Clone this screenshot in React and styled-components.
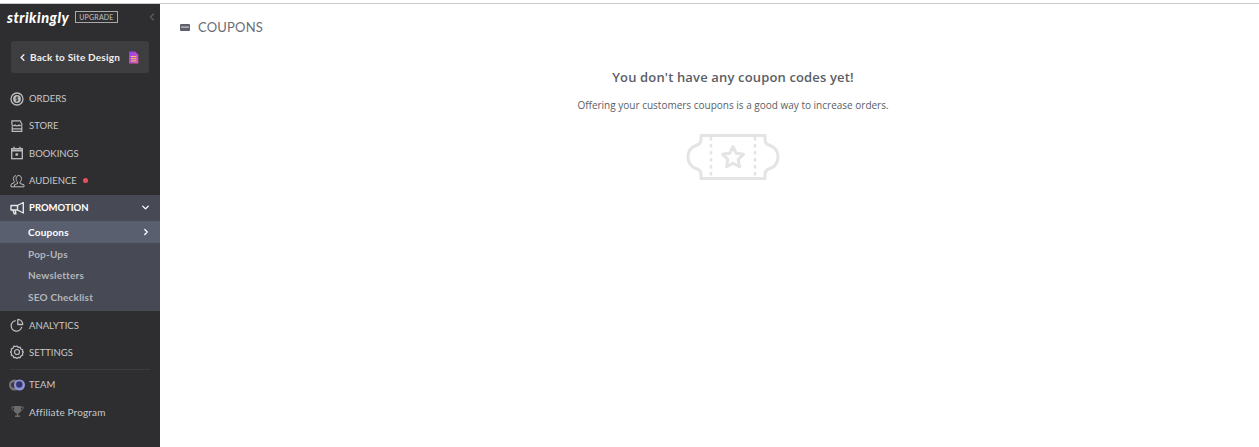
import React from 'react'
import styled, { createGlobalStyle } from 'styled-components'
import { ChevronLeft, ChevronRight, ChevronDown } from 'lucide-react'

const GlobalStyle = createGlobalStyle`
  html, body {
    margin: 0;
    height: 100%;
    background: #fff;
    overflow: hidden;
  }
  #root {
    height: 100%;
  }
`

const Page = styled.div`
  height: 447px;
  display: flex;
  flex-direction: column;
  font-family: Lato, "Liberation Sans", sans-serif;
`

const TopLine = styled.div`
  height: 3px;
  flex: none;
  background: #fff;
  border-bottom: 1px solid #c9c9c9;
`

const Body = styled.div`
  flex: 1;
  display: flex;
  min-height: 0;
`

const Sidebar = styled.aside`
  width: 160px;
  flex: none;
  background: #2e2e30;
  display: flex;
  flex-direction: column;
`

const Brand = styled.div`
  height: 26px;
  display: flex;
  align-items: center;
  padding: 0 2px 0 7px;
  color: #fff;
`

const Logo = styled.span`
  font-size: 14.5px;
  font-weight: 900;
  font-style: italic;
  letter-spacing: 0.5px;
`

const Upgrade = styled.span`
  margin-left: 6px;
  border: 1px solid #a9a9a9;
  color: #c4c4c4;
  font-size: 7px;
  letter-spacing: 0.2px;
  line-height: 10px;
  padding: 0 3px;
`

const Collapse = styled.span`
  margin-left: auto;
  display: flex;
  color: #5c5c5e;
`

const BackButton = styled.div`
  height: 32px;
  margin: 11px 11px 0;
  padding: 0 10px 0 6px;
  border-radius: 3px;
  background: #3e3e41;
  color: #f0f0f0;
  display: flex;
  align-items: center;
  font-size: 10px;
  font-weight: 700;
  letter-spacing: 0.2px;
`

const BackLabel = styled.span`
  margin-left: 2px;
  flex: 1;
`

const NavList = styled.nav`
  margin-top: 12px;
  display: flex;
  flex-direction: column;
`

const NavRow = styled.div`
  height: ${(p) => p.$height || 27.3}px;
  padding-left: 10px;
  padding-bottom: ${(p) => (p.$active ? 1 : 0)}px;
  margin-top: ${(p) => (p.$active ? 1.3 : 0)}px;
  box-sizing: border-box;
  display: flex;
  align-items: center;
  color: ${(p) => (p.$active ? '#fff' : '#c8c8ca')};
  font-size: ${(p) => (p.$plain ? 10 : 9.5)}px;
  font-weight: ${(p) => (p.$active ? 700 : 400)};
  letter-spacing: ${(p) => (p.$plain ? 0.15 : 0)}px;
  background: ${(p) => (p.$active ? '#474a54' : 'transparent')};
`

const IconSlot = styled.span`
  width: 14px;
  height: 14px;
  margin-right: 5px;
  flex: none;
  display: flex;
  align-items: center;
  justify-content: center;
  color: #bdbdbf;
  svg {
    display: block;
    flex: none;
  }
`

const Dot = styled.span`
  width: 5.5px;
  height: 5.5px;
  margin-left: 6px;
  border-radius: 50%;
  background: #e8505b;
`

const RowArrow = styled.span`
  margin-left: auto;
  margin-right: 9px;
  display: flex;
  color: #fff;
`

const SubMenu = styled.div`
  background: #474a54;
  padding-bottom: 4px;
  display: flex;
  flex-direction: column;
`

const SubRow = styled.div`
  height: ${(p) => (p.$active ? 22 : 21.3)}px;
  padding-left: 28px;
  display: flex;
  align-items: center;
  font-size: 10px;
  font-weight: 700;
  letter-spacing: 0.2px;
  color: ${(p) => (p.$active ? '#fff' : '#b4b6bc')};
  background: ${(p) => (p.$active ? '#5a5f70' : 'transparent')};
`

const Divider = styled.div`
  height: 1px;
  margin: 3px 10px 1px;
  background: #3b3b3d;
`

const Main = styled.main`
  flex: 1;
  min-width: 0;
  display: flex;
  flex-direction: column;
`

const Header = styled.header`
  height: 46px;
  padding-left: 20px;
  display: flex;
  align-items: center;
  color: #6a6d75;
  font-size: 13px;
  letter-spacing: 0.2px;
`

const HeaderIcon = styled.svg`
  width: 10px;
  height: 7px;
  margin-right: 8px;
`

const Empty = styled.section`
  padding: 18px 0 0 47px;
  display: flex;
  flex-direction: column;
  align-items: center;
  font-family: "Open Sans", "Liberation Sans", sans-serif;
  color: #5a5e66;
`

const EmptyTitle = styled.h2`
  margin: 0;
  font-size: 13px;
  line-height: 18px;
  font-weight: 600;
  letter-spacing: 0.15px;
`

const EmptyText = styled.p`
  margin: 12px 0 0;
  font-size: 10px;
  line-height: 14px;
`

const TicketArt = styled.svg`
  width: 94px;
  height: 48px;
  margin-top: 21px;
`

const Dollar = () => (
  <svg width="14" height="14" viewBox="0 0 14 14" fill="none" stroke="currentColor">
    <circle cx="7" cy="7" r="6" strokeWidth="1.3" />
    <circle cx="7" cy="7" r="3.9" fill="currentColor" stroke="none" />
    <path d="M8.400 5.800C7.900 5 5.700 5.100 5.700 6.200S8.300 7 8.300 8 6.100 9.100 5.600 8.200M7 4.200v5.600" stroke="#2e2e30" strokeWidth=".8" />
  </svg>
)

const Store = () => (
  <svg width="14" height="14" viewBox="0 0 14 14" fill="none" stroke="currentColor" strokeWidth="1.2">
    <path d="M2.800 1.800h8.400L13 5.400c0 1.600-2.300 1.800-3 .5-.7 1.200-3.300 1.200-4 0-.7 1.300-3 1.100-3-.5L2.800 1.800z" strokeLinejoin="round" transform="translate(-1 0)" />
    <path d="M2.200 7.200v5.200h9.600V7.200M2.200 9.800h9.600" />
  </svg>
)

const Calendar = () => (
  <svg width="14" height="14" viewBox="0 0 14 14" fill="none" stroke="currentColor" strokeWidth="1.3">
    <rect x="1.700" y="2.700" width="10.600" height="10" />
    <path d="M1.700 4.500h10.600" strokeWidth="2" />
    <path d="M4 .8v2M10 .8v2" />
    <rect x="5.500" y="7.300" width="2.600" height="2.400" fill="currentColor" stroke="none" />
  </svg>
)

const People = () => (
  <svg width="15" height="14" viewBox="0 0 15 14" fill="none" stroke="currentColor" strokeWidth="1">
    <path d="M10 8C12 6.800 12.200 1.500 8.800 1.500S5.500 6.800 7.500 8v1.500l-3 1.300v2h9.500v-2l-4-1.300V8z" />
    <path d="M6 1.800C3.200 1.300 2.600 5.800 4.300 7.500v1L1 10.300v2.500h3.500" />
  </svg>
)

const Megaphone = () => (
  <svg width="15" height="14" viewBox="0 0 15 14" fill="none" stroke="#e6e6e8" strokeWidth="1.4">
    <path d="M13.300 1.500v10.500L7.500 9H1V4.500h6.500l5.800-3z" strokeLinejoin="round" />
    <path d="M7.500 4.500V9M3 9l1.200 3.800h1.600L5.300 9" />
  </svg>
)

const Pie = () => (
  <svg width="14" height="14" viewBox="0 0 14 14" fill="none" stroke="currentColor" strokeWidth="1.3">
    <path d="M5.700 2.600a5.300 5.300 0 1 0 6 6.300" />
    <path d="M7.800 1.300a5 5 0 0 1 4.900 5.200H7.800V1.300z" strokeLinejoin="round" />
  </svg>
)

const Gear = () => (
  <svg width="14" height="14" viewBox="0 0 14 14" fill="none" stroke="currentColor" strokeWidth="1.2">
    <path d="M7 1l1.300 1.500 1.900-.3.700 1.900 1.800.7-.3 1.900L13.500 7l-1.100 1.300.3 1.900-1.800.7-.7 1.800-1.900-.3L7 13.500l-1.300-1.100-1.900.3-.7-1.800-1.800-.7.300-1.900L.5 7l1.100-1.300-.3-1.900 1.800-.7.700-1.900 1.900.3L7 1z" strokeLinejoin="round" />
    <circle cx="7" cy="7" r="2.500" />
  </svg>
)

const TeamBadge = () => (
  <svg width="16" height="12" viewBox="0 0 16 12">
    <circle cx="5.500" cy="6" r="5.500" fill="#77767a" />
    <circle cx="4.800" cy="6" r="2.800" fill="#3a3a3c" />
    <circle cx="10.500" cy="6" r="5.500" fill="#8f95d8" />
    <circle cx="10.300" cy="5.500" r="3.200" fill="#33356e" />
  </svg>
)

const Trophy = () => (
  <svg width="13" height="13" viewBox="0 0 13 13" fill="#6b6b6d">
    <path d="M3 1h7v4.200C10 7.300 8.300 8.200 7.200 8.400v2h1.800V12H4v-1.600h1.800v-2C4.700 8.200 3 7.300 3 5.200V1z" />
    <path d="M3 2H.8c0 2 .8 3.400 2.500 3.800M10 2h2.200c0 2-.8 3.400-2.500 3.800" fill="none" stroke="#6b6b6d" />
  </svg>
)

const SiteDoc = () => (
  <svg width="11" height="13" viewBox="0 0 11 13">
    <defs>
      <linearGradient id="docGrad" x1="0" y1="0" x2="1" y2="1">
        <stop offset="0" stopColor="#8a3df0" />
        <stop offset="1" stopColor="#e85aa8" />
      </linearGradient>
    </defs>
    <path d="M1 .5h6l3.300 3.300v8.700H1z" fill="url(#docGrad)" />
    <path d="M2.800 5.500h5.500M2.800 7.700h5.500M2.800 9.900h5.500" stroke="#f4c860" strokeWidth="1" />
  </svg>
)

const Ticket = () => (
  <TicketArt viewBox="0 0 94 48" fill="none" stroke="#e3e4e6" strokeWidth="3">
    <path
      d="M15 2.500h64v4.500c0 3 2 4.500 5 5.500 5.500 2 8 6.500 8 11.500s-2.500 9.500-8 11.500c-3 1-5 2.500-5 5.500v4.500H15v-4.500c0-3-2-4.500-5-5.500-5.500-2-8-6.500-8-11.500s2.500-9.500 8-11.500c3-1 5-2.500 5-5.500V2.500z"
      strokeLinejoin="round"
    />
    <path d="M25 4v40M69 4v40" strokeDasharray="3.500 3.500" strokeWidth="2.500" />
    <path
      d="M47 13.500l3.200 6.800 7.300 1-5.300 5.100 1.300 7.300-6.500-3.500-6.500 3.500 1.300-7.300-5.300-5.100 7.300-1z"
      strokeLinejoin="round"
    />
  </TicketArt>
)

const NavItem = ({ icon, label, dot, plain }) => (
  <NavRow $plain={plain}>
    <IconSlot>{icon}</IconSlot>
    {label}
    {dot && <Dot />}
  </NavRow>
)

const App = () => (
  <Page>
    <GlobalStyle />
    <TopLine />
    <Body>
      <Sidebar>
        <Brand>
          <Logo>strikingly</Logo>
          <Upgrade>UPGRADE</Upgrade>
          <Collapse>
            <ChevronLeft size={12} strokeWidth={2.5} />
          </Collapse>
        </Brand>
        <BackButton>
          <ChevronLeft size={11} strokeWidth={3} />
          <BackLabel>Back to Site Design</BackLabel>
          <SiteDoc />
        </BackButton>
        <NavList>
          <NavItem icon={<Dollar />} label="ORDERS" />
          <NavItem icon={<Store />} label="STORE" />
          <NavItem icon={<Calendar />} label="BOOKINGS" />
          <NavItem icon={<People />} label="AUDIENCE" dot />
          <NavRow $active $height={26}>
            <IconSlot>
              <Megaphone />
            </IconSlot>
            PROMOTION
            <RowArrow>
              <ChevronDown size={11} strokeWidth={3} />
            </RowArrow>
          </NavRow>
          <SubMenu>
            <SubRow $active>
              Coupons
              <RowArrow>
                <ChevronRight size={10} strokeWidth={3} />
              </RowArrow>
            </SubRow>
            <SubRow>Pop-Ups</SubRow>
            <SubRow>Newsletters</SubRow>
            <SubRow>SEO Checklist</SubRow>
          </SubMenu>
          <NavItem icon={<Pie />} label="ANALYTICS" />
          <NavItem icon={<Gear />} label="SETTINGS" />
          <Divider />
          <NavItem icon={<TeamBadge />} label="TEAM" />
          <NavItem icon={<Trophy />} label="Affiliate Program" plain />
        </NavList>
      </Sidebar>
      <Main>
        <Header>
          <HeaderIcon viewBox="0 0 10 7">
            <rect width="10" height="7" rx="1" fill="#5d6069" />
            <rect x="1" y="2.500" width="8" height="1.200" fill="#c8cace" />
          </HeaderIcon>
          COUPONS
        </Header>
        <Empty>
          <EmptyTitle>You don't have any coupon codes yet!</EmptyTitle>
          <EmptyText>Offering your customers coupons is a good way to increase orders.</EmptyText>
          <Ticket />
        </Empty>
      </Main>
    </Body>
  </Page>
)

export default App
